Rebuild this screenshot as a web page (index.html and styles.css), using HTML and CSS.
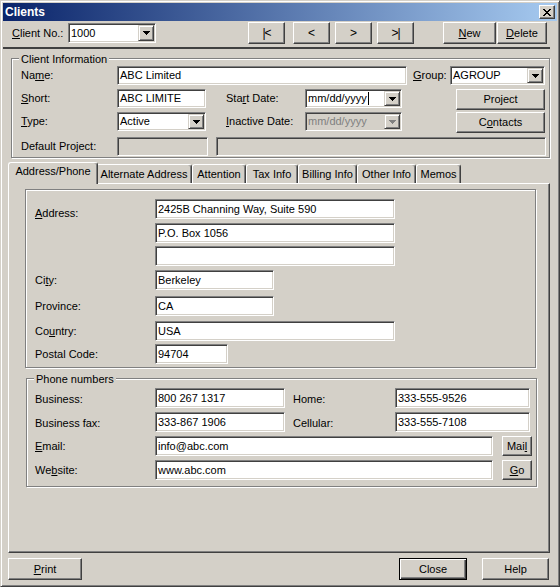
FILE: index.html
```html
<!DOCTYPE html>
<html>
<head>
<meta charset="utf-8">
<title>Clients</title>
<link rel="stylesheet" href="styles.css">
</head>
<body>
<div class="window">
  <div class="titlebar">
    <span class="title">Clients</span>
    <span class="tb-close"><svg width="8" height="7" viewBox="0 0 8 7"><path d="M0 0h2v1H0zM6 0h2v1H6zM1 1h2v1H1zM5 1h2v1H5zM2 2h4v1H2zM3 3h2v1H3zM2 4h4v1H2zM1 5h2v1H1zM5 5h2v1H5zM0 6h2v1H0zM6 6h2v1H6z"/></svg></span>
  </div>

  <div class="toolbar">
    <span class="lbl tb-label"><u>C</u>lient No.:</span>
    <div class="combo tb-combo"><span class="val">1000</span><span class="dd"><svg width="7" height="4" viewBox="0 0 7 4"><path d="M0 0h7v1H0zM1 1h5v1H1zM2 2h3v1H2zM3 3h1v1H3z"/></svg></span></div>
    <div class="btn nav nav-first"><span class="navtxt">|&lt;</span></div>
    <div class="btn nav nav-prev">&lt;</div>
    <div class="btn nav nav-next">&gt;</div>
    <div class="btn nav nav-last"><span class="navtxt">&gt;|</span></div>
    <div class="btn btn-new"><u>N</u>ew</div>
    <div class="btn btn-delete"><u>D</u>elete</div>
  </div>
  <div class="sep"></div>

  <div class="group client-info">
    <div class="legend">Client Information</div>
    <div class="ci-grid">
      <span class="lbl c-l1 r1">Na<u>m</u>e:</span>
      <div class="field c-name r1">ABC Limited</div>
      <span class="lbl c-l7 r1"><u>G</u>roup:</span>
      <div class="combo c-group r1"><span class="val">AGROUP</span><span class="dd"><svg width="7" height="4" viewBox="0 0 7 4"><path d="M0 0h7v1H0zM1 1h5v1H1zM2 2h3v1H2zM3 3h1v1H3z"/></svg></span></div>

      <span class="lbl c-l1 r2"><u>S</u>hort:</span>
      <div class="field c-f2 r2">ABC LIMITE</div>
      <span class="lbl c-l4 r2">Sta<u>r</u>t Date:</span>
      <div class="combo c-f5 r2"><span class="val">mm/dd/yyyy<span class="caret"></span></span><span class="dd"><svg width="7" height="4" viewBox="0 0 7 4"><path d="M0 0h7v1H0zM1 1h5v1H1zM2 2h3v1H2zM3 3h1v1H3z"/></svg></span></div>
      <div class="c-btns">
        <div class="btn side-btn">Project</div>
        <div class="btn side-btn">C<u>o</u>ntacts</div>
      </div>

      <span class="lbl c-l1 r3"><u>T</u>ype:</span>
      <div class="combo c-f2 r3"><span class="val">Active</span><span class="dd"><svg width="7" height="4" viewBox="0 0 7 4"><path d="M0 0h7v1H0zM1 1h5v1H1zM2 2h3v1H2zM3 3h1v1H3z"/></svg></span></div>
      <span class="lbl c-l4 r3"><u>I</u>nactive Date:</span>
      <div class="combo disabled c-f5 r3"><span class="val">mm/dd/yyyy</span><span class="dd"><svg width="7" height="4" viewBox="0 0 7 4"><path d="M0 0h7v1H0zM1 1h5v1H1zM2 2h3v1H2zM3 3h1v1H3z"/></svg></span></div>

      <span class="lbl c-l1 r4">Default Project:</span>
      <div class="field disabled c-dp1 r4"></div>
      <div class="field disabled c-dp2 r4"></div>
    </div>
  </div>

  <div class="tabs">
    <div class="tab active">Address/Phone</div>
    <div class="tab t-alt">Alternate Address</div>
    <div class="tab t-att">Attention</div>
    <div class="tab t-tax">Tax Info</div>
    <div class="tab t-bill">Billing Info</div>
    <div class="tab t-other">Other Info</div>
    <div class="tab t-memo">Memos</div>
  </div>
  <div class="panel">
    <div class="group addr">
      <div class="row">
        <span class="lbl a-lbl a-lbl-top"><u>A</u>ddress:</span>
        <div class="field f-long">2425B Channing Way, Suite 590</div>
      </div>
      <div class="row m4">
        <span class="a-lbl"></span>
        <div class="field f-long">P.O. Box 1056</div>
      </div>
      <div class="row m3">
        <span class="a-lbl"></span>
        <div class="field f-long"></div>
      </div>
      <div class="row m4">
        <span class="lbl a-lbl">Ci<u>t</u>y:</span>
        <div class="field f-mid">Berkeley</div>
      </div>
      <div class="row m6">
        <span class="lbl a-lbl">Province:</span>
        <div class="field f-mid">CA</div>
      </div>
      <div class="row m5">
        <span class="lbl a-lbl">Co<u>u</u>ntry:</span>
        <div class="field f-long">USA</div>
      </div>
      <div class="row m3">
        <span class="lbl a-lbl">Postal Code:</span>
        <div class="field f-short">94704</div>
      </div>
    </div>

    <div class="group phone">
      <div class="legend">Phone numbers</div>
      <div class="row p-first">
        <span class="lbl p-lbl p-low">Business:</span>
        <div class="field p-f">800 267 1317</div>
        <span class="lbl p-lbl2 p-low">Home:</span>
        <div class="field p-f2">333-555-9526</div>
      </div>
      <div class="row m4">
        <span class="lbl p-lbl p-low">Business fax:</span>
        <div class="field p-f">333-867 1906</div>
        <span class="lbl p-lbl2 p-low">Cellular:</span>
        <div class="field p-f2">333-555-7108</div>
      </div>
      <div class="row m4">
        <span class="lbl p-lbl"><u>E</u>mail:</span>
        <div class="field p-wide">info@abc.com</div>
        <div class="btn p-btn">Mai<u>l</u></div>
      </div>
      <div class="row m4">
        <span class="lbl p-lbl">We<u>b</u>site:</span>
        <div class="field p-wide">www.abc.com</div>
        <div class="btn p-btn"><u>G</u>o</div>
      </div>
    </div>
  </div>

  <div class="footer">
    <div class="btn f-print"><u>P</u>rint</div>
    <div class="btn f-close">Close</div>
    <div class="btn f-help">Help</div>
  </div>
</div>
</body>
</html>
```

FILE: styles.css
```css
* { box-sizing: border-box; }
html, body { margin: 0; padding: 0; }
body {
  font-family: "Liberation Sans", Arial, sans-serif;
  font-size: 11px;
  color: #000;
  background: #D4D0C8;
}
u { text-decoration: underline; text-underline-offset: 1px; }

.window {
  width: 560px;
  height: 587px;
  background: #D4D0C8;
  border: 1px solid;
  border-color: #D4D0C8 #404040 #404040 #D4D0C8;
  box-shadow: inset 1px 1px #fff, inset -1px -1px #808080;
  padding: 2px;
  display: flex;
  flex-direction: column;
  overflow: hidden;
}

/* title bar */
.titlebar {
  flex: none;
  height: 18px;
  display: flex;
  align-items: center;
  padding: 0 2px;
  background: linear-gradient(to right, #0A246A, #A6CAF0);
}
.title {
  flex: 1;
  color: #fff;
  font-weight: bold;
  font-size: 12px;
  line-height: 14px;
}
.tb-close {
  width: 16px;
  height: 14px;
  background: #D4D0C8;
  border: 1px solid;
  border-color: #fff #404040 #404040 #fff;
  box-shadow: inset -1px -1px #808080;
  display: flex;
  align-items: center;
  justify-content: center;
}
.tb-close svg { display: block; margin-left: 0; }

/* generic controls */
.lbl { white-space: nowrap; line-height: 13px; }

.field {
  height: 19px;
  background: #fff;
  border: 1px solid;
  border-color: #808080 #fff #fff #808080;
  box-shadow: inset 1px 1px #404040, inset -1px -1px #D4D0C8;
  padding: 0 0 0 2px;
  line-height: 17px;
  white-space: nowrap;
  overflow: hidden;
}
.field.disabled { background: #D4D0C8; }

.combo {
  height: 19px;
  display: flex;
  background: #fff;
  border: 1px solid;
  border-color: #808080 #fff #fff #808080;
  box-shadow: inset 1px 1px #404040, inset -1px -1px #D4D0C8;
  padding: 1px;
}
.combo .val {
  flex: 1;
  padding-left: 1px;
  line-height: 15px;
  white-space: nowrap;
  overflow: hidden;
  display: flex;
  align-items: center;
}
.combo .dd {
  width: 16px;
  flex: none;
  background: #D4D0C8;
  border: 1px solid;
  border-color: #D4D0C8 #404040 #404040 #D4D0C8;
  box-shadow: inset 1px 1px #fff, inset -1px -1px #808080;
  display: flex;
  align-items: center;
  justify-content: center;
}
.combo .dd svg { display: block; fill: #000; }
.combo.disabled { background: #D4D0C8; }
.combo.disabled .val { color: #808080; }
.combo.disabled .dd svg { fill: #808080; }
.caret { display: inline-block; width: 1px; height: 13px; background: #000; margin-left: 1px; }

.btn {
  display: flex;
  align-items: center;
  justify-content: center;
  height: 22px;
  background: #D4D0C8;
  border: 1px solid;
  border-color: #fff #404040 #404040 #fff;
  box-shadow: inset -1px -1px #808080;
  white-space: nowrap;
  line-height: 13px;
  flex: none;
}

/* toolbar */
.toolbar {
  flex: none;
  display: flex;
  align-items: center;
  height: 22px;
  margin-top: 1px;
}
.tb-label { margin-left: 9px; width: 56px; }
.tb-combo { width: 88px; height: 20px; }
.nav { width: 37px; font-size: 12px; }
.navtxt { letter-spacing: -1px; }
.nav-first { margin-left: 92px; }
.nav-prev { margin-left: 8px; }
.nav-next { margin-left: 5px; }
.nav-last { margin-left: 5px; }
.btn-new { margin-left: 29px; width: 53px; }
.btn-delete { margin-left: 1px; width: 50px; }

.sep {
  flex: none;
  margin-top: 3px;
  width: 547px;
  height: 2px;
  background: #404040;
}

/* group boxes */
.group {
  flex: none;
  border: 1px solid #808080;
  box-shadow: inset 1px 1px #fff, 1px 1px #fff;
  display: flex;
  flex-direction: column;
}
.legend {
  align-self: flex-start;
  background: #D4D0C8;
  padding: 0 2px;
  line-height: 13px;
  margin: -6px 0 0 7px;
  white-space: nowrap;
}

.client-info {
  margin: 9px 0 0 8px;
  width: 539px;
  height: 100px;
}
.ci-grid {
  display: grid;
  grid-template-columns: 105px 89px 20px 79px 97px 11px 37px 95px;
  grid-template-rows: 19px 19px 19px 21px;
  row-gap: 4px;
}
.r1 { grid-row: 1; }
.r2 { grid-row: 2; }
.r3 { grid-row: 3; }
.r4 { grid-row: 4; align-self: end; }
.ci-grid .lbl { align-self: center; }
.ci-grid .lbl.r4 { align-self: center; padding-top: 1px; }
.c-l1 { grid-column: 1; padding-left: 9px; }
.c-l4 { grid-column: 4; }
.c-l7 { grid-column: 7; }
.c-name { grid-column: 2 / span 5; margin-right: 6px; }
.c-group { grid-column: 8; }
.c-f2 { grid-column: 2; }
.c-f5 { grid-column: 5; }
.c-btns {
  grid-column: 8;
  grid-row: 2 / span 2;
  margin-left: 6px;
  display: flex;
  flex-direction: column;
  gap: 2px;
}
.side-btn { height: 21px; }
.c-dp1 { grid-column: 2; margin-right: -2px; }
.c-dp2 { grid-column: 3 / span 6; margin-left: 10px; margin-right: -1px; }

/* tabs */
.tabs {
  flex: none;
  display: flex;
  align-items: flex-end;
  height: 21px;
  margin-top: 4px;
  padding-left: 7px;
}
.tab {
  height: 19px;
  border-top: 1px solid #fff;
  border-left: 1px solid #fff;
  border-right: 1px solid #404040;
  box-shadow: inset -1px 0 #808080;
  border-radius: 3px 3px 0 0;
  display: flex;
  align-items: center;
  justify-content: center;
  white-space: nowrap;
  line-height: 13px;
  flex: none;
}
.tab.active {
  width: 90px;
  height: 22px;
  margin: 0 -2px -1px -2px;
  position: relative;
  z-index: 1;
  background: #D4D0C8;
  align-items: flex-start;
  padding-top: 2px;
}
.t-alt { width: 96px; }
.t-att { width: 54px; }
.t-tax { width: 52px; }
.t-bill { width: 59px; }
.t-other { width: 59px; }
.t-memo { width: 45px; }

.panel {
  flex: none;
  margin-left: 5px;
  width: 542px;
  height: 370px;
  border: 1px solid;
  border-color: #fff #404040 #404040 #fff;
  box-shadow: inset -1px -1px #808080;
  display: flex;
  flex-direction: column;
}

.row {
  flex: none;
  display: flex;
  align-items: center;
  height: 20px;
}
.row .field { height: 20px; line-height: 18px; }
.m3 { margin-top: 3px; }
.m4 { margin-top: 4px; }
.m5 { margin-top: 5px; }
.m6 { margin-top: 6px; }

/* address group */
.addr {
  margin: 5px 0 0 16px;
  width: 511px;
  height: 179px;
  padding-top: 9px;
}
.a-lbl { width: 129px; padding-left: 9px; flex: none; padding-top: 1px; }
.a-lbl-top { align-self: flex-start; margin-top: 8px; padding-top: 0; }
.f-long { width: 240px; }
.f-mid { width: 119px; }
.f-short { width: 73px; }

/* phone group */
.phone {
  margin: 10px 0 0 17px;
  width: 511px;
  height: 109px;
}
.p-first { margin-top: 2px; }
.p-lbl { width: 128px; padding-left: 8px; flex: none; }
.p-low { padding-top: 3px; }
.p-f { width: 130px; }
.p-lbl2 { margin-left: 8px; width: 102px; flex: none; }
.p-f2 { width: 135px; }
.p-wide { width: 338px; }
.p-btn { margin-left: 9px; width: 30px; height: 20px; }

/* footer */
.footer {
  flex: none;
  display: flex;
  margin-top: 5px;
  height: 22px;
}
.f-print { margin-left: 5px; width: 74px; }
.f-close {
  margin-left: 317px;
  width: 68px;
  border: 1px solid #000;
  box-shadow: inset 1px 1px #fff, inset -1px -1px #404040, inset -2px -2px #808080;
}
.f-help { margin-left: 15px; width: 67px; }
```
